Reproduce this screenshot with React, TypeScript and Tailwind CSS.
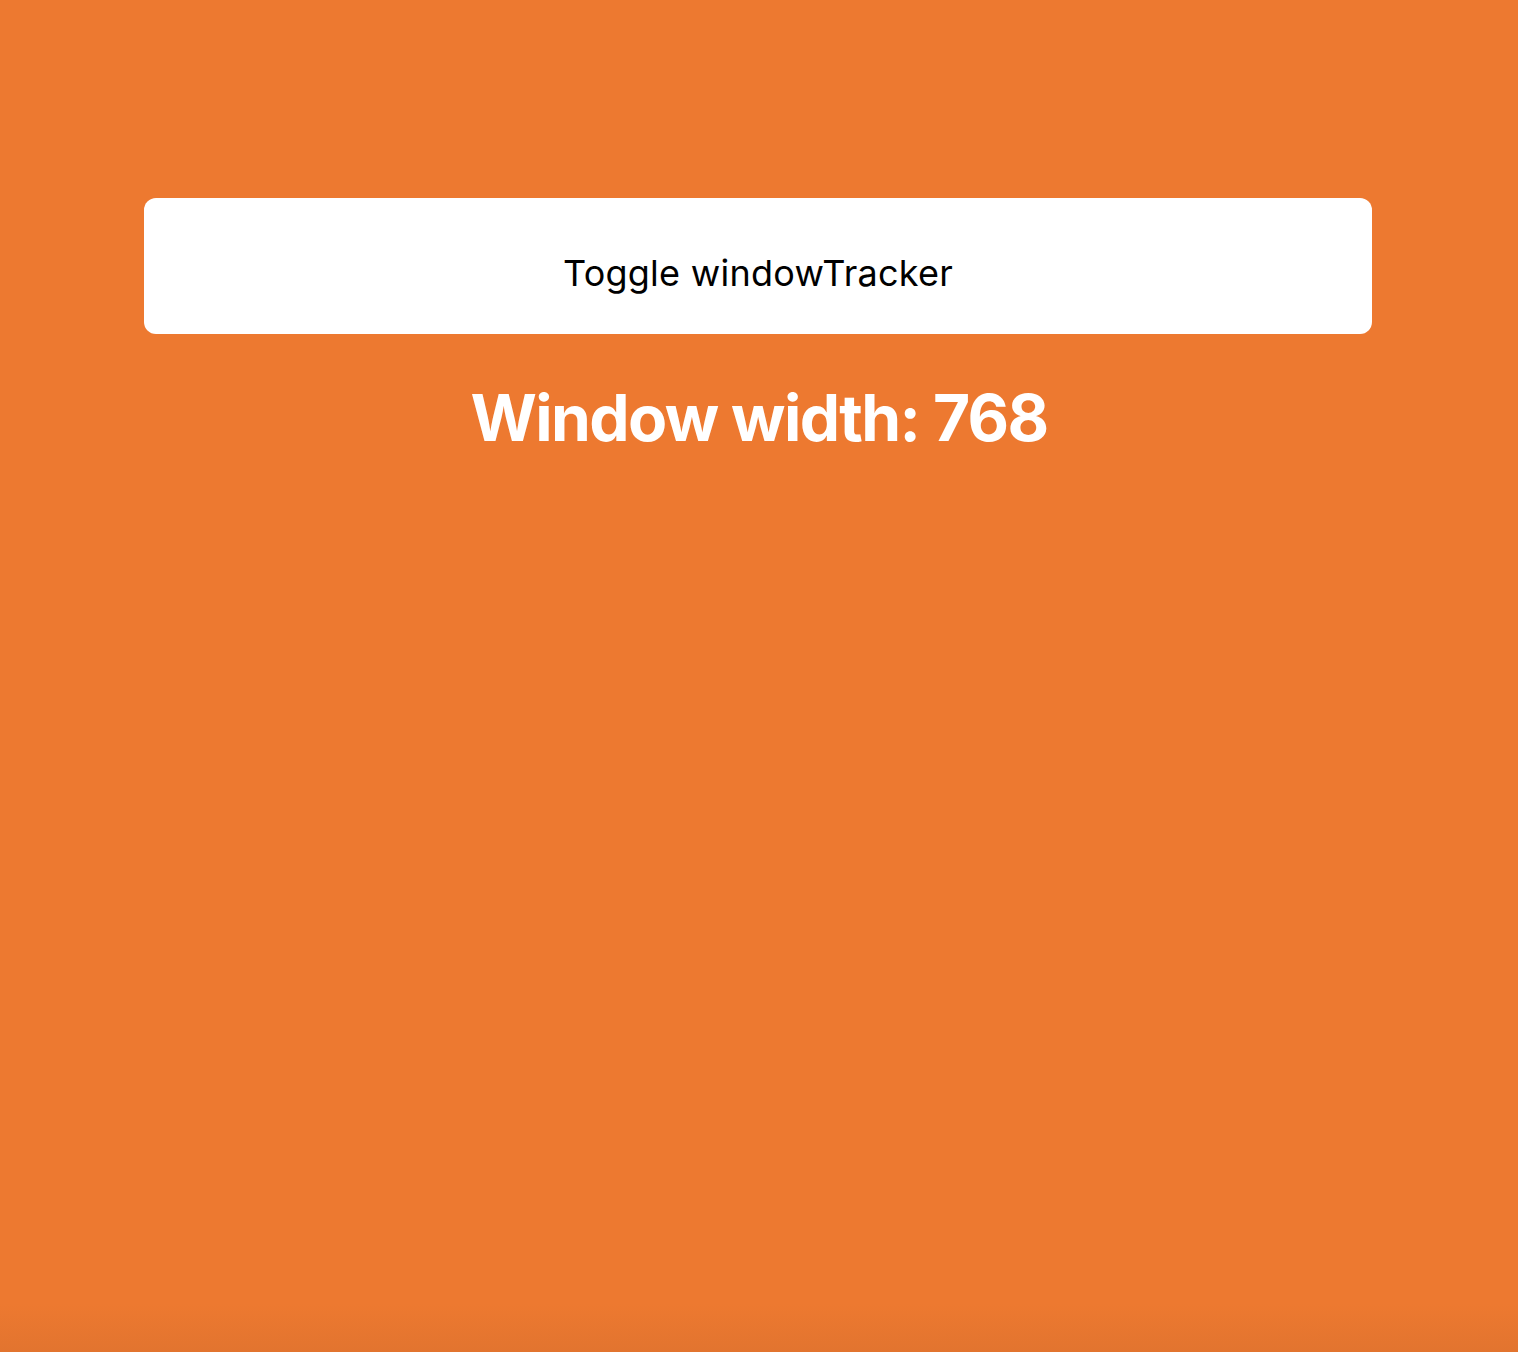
export default function App() {
  return (
    <div
      className="min-h-[1352px] w-full bg-[#ed7930] flex flex-col items-center pt-[198px]"
      style={{ fontFamily: "Inter, 'Noto Sans', sans-serif" }}
    >
      <button className="w-[1228px] h-[136px] bg-white rounded-[12px] text-black text-[36px] leading-none tracking-[0.25px] flex items-center justify-center pt-[14px] -translate-x-px">
        Toggle windowTracker
      </button>
      <h1 className="mt-[46px] text-white font-bold text-[64px] leading-[1.2] tracking-[-1.6px]">Window width: 768</h1>
      <div className="mt-auto w-full h-[48px] bg-gradient-to-b from-[#ed7930] to-[#e2742f]" />
    </div>
  );
}
